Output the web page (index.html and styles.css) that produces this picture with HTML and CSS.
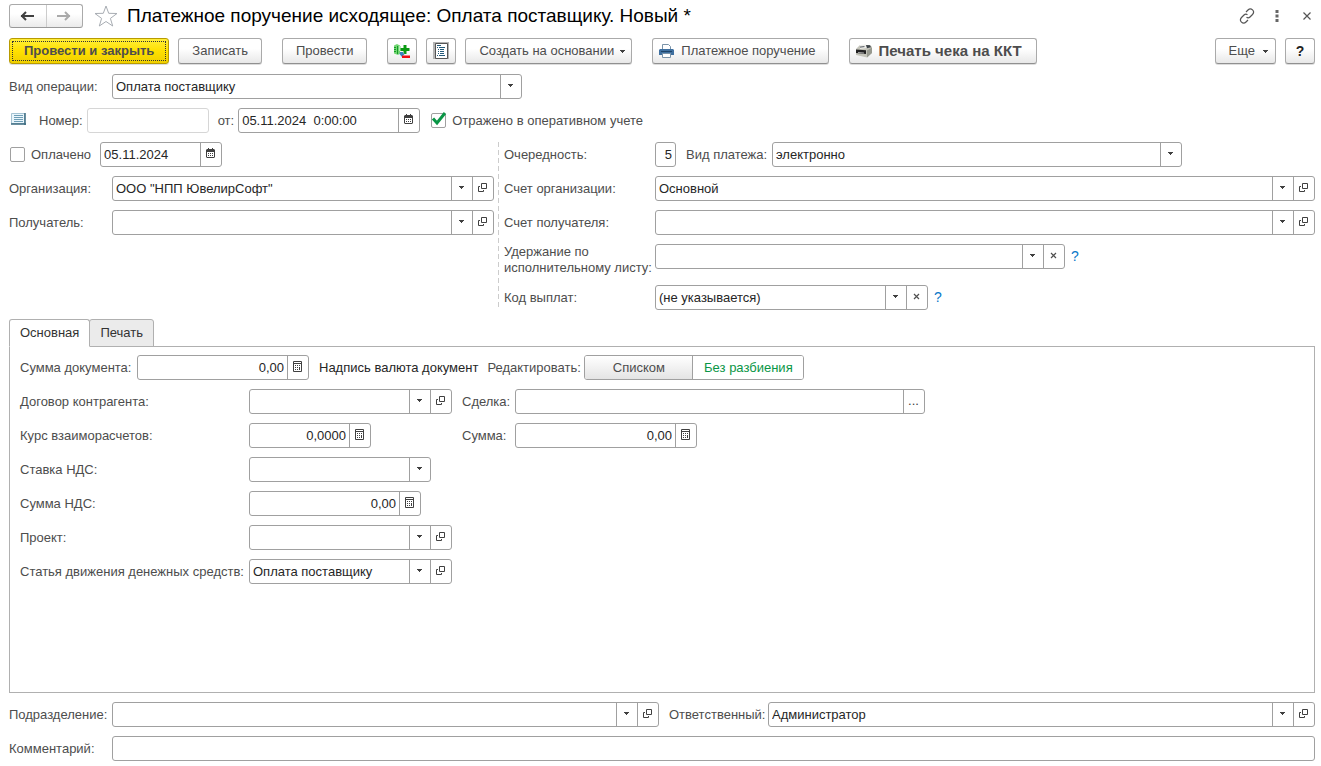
FILE: index.html
```html
<!DOCTYPE html>
<html lang="ru">
<head>
<meta charset="utf-8">
<title>Платежное поручение исходящее</title>
<link rel="stylesheet" href="styles.css">
</head>
<body>
<svg class="sprite" aria-hidden="true">
  <symbol id="arrow" viewBox="0 0 5 3"><path d="M0 0h5v1H4v1H3v1H2V2H1V1H0z" fill="#404040"/></symbol>
  <symbol id="open" viewBox="0 0 9 9"><path d="M3.500.5h5v5h-5zM2 3.500H.5v5h5V7" fill="none" stroke="#404040"/></symbol>
  <symbol id="cross" viewBox="0 0 7 7"><path d="M1 1l5 5M6 1L1 6" fill="none" stroke="#505050" stroke-width="1.200"/></symbol>
  <symbol id="calc" viewBox="0 0 9 11"><path d="M.5.5h8v10h-8zM0 2.500h9" fill="none" stroke="#404040"/><path d="M2 4.500h5M2 6.500h5M2 8.500h3M6 8.500h1" fill="none" stroke="#404040" stroke-dasharray="1 1"/><path d="M6 7h1v2H6z" fill="#404040"/></symbol>
  <symbol id="cal" viewBox="0 0 9 11"><path d="M1 1h1V0h1v1h3V0h1v1h1l1 1v7l-1 1H1L0 9V2zM1 4v5h7V4z" fill="#404040" fill-rule="evenodd"/><path d="M2 5.500h5M2 7.500h5" fill="none" stroke="#404040" stroke-dasharray="1 1"/></symbol>
</svg>

<header class="title-bar">
  <div class="history">
    <button type="button" aria-label="Назад"><svg width="16" height="12" viewBox="0 0 16 12"><path d="M1 6h13M6 2L2 6l4 4" fill="none" stroke="#404040" stroke-width="2"/></svg></button>
    <button type="button" aria-label="Вперед"><svg width="16" height="12" viewBox="0 0 16 12"><path d="M1 6h13M9 2l4 4-4 4" fill="none" stroke="#aaa" stroke-width="2"/></svg></button>
  </div>
  <button type="button" class="plain star" aria-label="В избранное"><svg width="24" height="22" viewBox="0 0 24 22"><path d="M12 1l2.700 7.300 8.300.2-6.600 4.900 2.300 7.600-6.700-4.500L5.300 21l2.300-7.600L1 8.500l8.300-.2z" fill="#fff" stroke="#a8adb3"/></svg></button>
  <h1>Платежное поручение исходящее: Оплата поставщику. Новый *</h1>
  <div class="window-tools">
    <button type="button" class="plain" aria-label="Ссылка"><svg width="16" height="16" viewBox="0 0 16 16"><path d="M7 4l2-2c3-3 7.500 1 4.500 4.500l-2.500 2.500c-1 1-2.500 1-3.500.3M9 12l-2 2c-3 3-7.500-1-4.500-4.500L5 7c1-1 2.500-1 3.500-.3" fill="none" stroke="#555" stroke-width="1.200"/></svg></button>
    <button type="button" class="plain" aria-label="Меню"><svg width="4" height="12" viewBox="0 0 4 12"><path d="M.5 0h3v3h-3zM.5 4.500h3v3h-3zM.5 9h3v3h-3z" fill="#666"/></svg></button>
    <button type="button" class="plain close" aria-label="Закрыть"><svg width="8" height="8" viewBox="0 0 8 8"><path d="M.5.5l7 7M7.500.5l-7 7" stroke="#555" stroke-width="1.200"/></svg></button>
  </div>
</header>

<nav class="toolbar">
  <div class="group">
    <button type="button" class="btn primary">Провести и закрыть</button>
    <button type="button" class="btn">Записать</button>
  </div>
  <button type="button" class="btn">Провести</button>
  <div class="group">
    <button type="button" class="btn icon-btn" aria-label="Движения документа"><svg width="16" height="16" viewBox="0 0 16 16"><path d="M0 2.500L3 1l3 1.500v8L4 12 0 10.500z" fill="#73d673"/><path d="M0 4h2v1H0zM0 6h2v1H0zM0 8h2v1H0zM3 3h1v8H3z" fill="#159b28"/><path d="M5 3h2v5H5z" fill="#b7edb7"/><path d="M9.500 2h3v3h3v3h-3v3h-3V8h-3V5h3z" fill="#0a9a12"/><path d="M6 9h3v1.500h2L8 14l-3-3.500h1z" fill="#3984bd"/><path d="M8 12.500h8V15H8z" fill="#f00b12"/></svg></button>
    <button type="button" class="btn icon-btn" aria-label="Реестр"><svg width="16" height="18" viewBox="0 0 16 18"><path d="M0 0h16v17H0z" fill="#b5b5b5"/><path d="M2.500 1.500h12v15h-12z" fill="#fff" stroke="#555"/><path d="M4 3.500h4M6 5.500h6M7 7.500h4M7 9.500h4M7 11.500h4M6 13.500h6M4 5.500h1M5 7.500h1M5 9.500h1M5 11.500h1M4 13.500h1" stroke="#245a7a"/></svg></button>
    <button type="button" class="btn create">Создать на основании <svg width="5" height="3"><use href="#arrow"/></svg></button>
  </div>
  <button type="button" class="btn print"><svg width="15" height="15" viewBox="0 0 15 15"><path d="M3.500 6V.5h6l2 2V6" fill="#fff" stroke="#7a93a8"/><path d="M1 5h13l1 1v5H0V6z" fill="#3f70a0"/><path d="M2 7h11v1H2z" fill="#1e4468"/><path d="M3.500 9.500h8v4h-8z" fill="#fff" stroke="#7a93a8"/></svg>Платежное поручение</button>
  <button type="button" class="btn receipt"><svg width="16" height="14" viewBox="0 0 16 14"><path d="M0 5L4 1h10l2 2v6l-5 4.500L0 11z" fill="#c4c4ba"/><path d="M4 1l6-.5 1 3.500-7 1z" fill="#ededea"/><path d="M10 1l4 .3 1 2-4 1z" fill="#3c4248"/><path d="M0 5.500l10 .8V10L0 9z" fill="#222"/><path d="M2 8l6 .5v1L2 9z" fill="#aaa"/><path d="M11 6.500l5-3V9l-5 4.500z" fill="#97998f"/><path d="M4 2.500l4-.5 1 1-5 .8z" fill="#6a6f74"/></svg>Печать чека на ККТ</button>
  <div class="group end">
    <button type="button" class="btn more">Еще <svg width="5" height="3"><use href="#arrow"/></svg></button>
    <button type="button" class="btn icon-btn help">?</button>
  </div>
</nav>

<main>
  <div class="row">
    <label class="name" for="kind">Вид операции:</label>
    <div class="field w-long c1"><select id="kind"><option>Оплата поставщику</option></select><span class="cell"><svg width="5" height="3"><use href="#arrow"/></svg></span></div>
  </div>
  <div class="row number-row">
    <svg class="doc" width="15" height="12" viewBox="0 0 15 12"><path d="M.5.5h13v10H.5z" fill="#e9f5fb" stroke="#a5c3d3"/><path d="M0 11h15M14 0v12" stroke="#3b6b80" stroke-width="1.500"/><path d="M3 2.500h9M3 4.500h9M3 6.500h9M3 8.500h9" stroke="#6d9db5"/></svg>
    <label for="num">Номер:</label>
    <div class="field w-num disabled"><input id="num" type="text" disabled></div>
    <label for="date">от:</label>
    <div class="field w-date c1"><input id="date" type="text" value="05.11.2024  0:00:00"><button type="button" class="cell" aria-label="Календарь"><svg width="9" height="11"><use href="#cal"/></svg></button></div>
    <div class="check"><input id="acc" type="checkbox" checked><svg class="tick" width="16" height="15" viewBox="0 0 16 15"><path d="M2 6.500L6 11 14 1" fill="none" stroke="#0a9646" stroke-width="3"/></svg><label for="acc">Отражено в оперативном учете</label></div>
  </div>

  <div class="columns">
    <section class="left">
      <div class="row">
        <div class="check"><input id="paid" type="checkbox"><label for="paid">Оплачено</label></div>
        <div class="field w-num c1"><input type="text" value="05.11.2024" aria-label="Дата оплаты"><button type="button" class="cell" aria-label="Календарь"><svg width="9" height="11"><use href="#cal"/></svg></button></div>
      </div>
      <div class="row">
        <label class="name" for="org">Организация:</label>
        <div class="field grow c2"><select id="org"><option>ООО "НПП ЮвелирСофт"</option></select><span class="cell"><svg width="5" height="3"><use href="#arrow"/></svg></span><button type="button" class="cell" aria-label="Открыть"><svg width="9" height="9"><use href="#open"/></svg></button></div>
      </div>
      <div class="row">
        <label class="name" for="payee">Получатель:</label>
        <div class="field grow c2"><select id="payee"><option></option></select><span class="cell"><svg width="5" height="3"><use href="#arrow"/></svg></span><button type="button" class="cell" aria-label="Открыть"><svg width="9" height="9"><use href="#open"/></svg></button></div>
      </div>
    </section>
    <section class="right">
      <div class="row">
        <label class="name" for="order">Очередность:</label>
        <div class="field w-one num"><input id="order" type="text" value="5"></div>
        <label class="pay" for="pay">Вид платежа:</label>
        <div class="field w-long c1"><select id="pay"><option>электронно</option></select><span class="cell"><svg width="5" height="3"><use href="#arrow"/></svg></span></div>
      </div>
      <div class="row">
        <label class="name" for="acc-org">Счет организации:</label>
        <div class="field grow c2"><select id="acc-org"><option>Основной</option></select><span class="cell"><svg width="5" height="3"><use href="#arrow"/></svg></span><button type="button" class="cell" aria-label="Открыть"><svg width="9" height="9"><use href="#open"/></svg></button></div>
      </div>
      <div class="row">
        <label class="name" for="acc-payee">Счет получателя:</label>
        <div class="field grow c2"><select id="acc-payee"><option></option></select><span class="cell"><svg width="5" height="3"><use href="#arrow"/></svg></span><button type="button" class="cell" aria-label="Открыть"><svg width="9" height="9"><use href="#open"/></svg></button></div>
      </div>
      <div class="row tall">
        <label class="name" for="hold">Удержание по исполнительному листу:</label>
        <div class="field w-long c2"><select id="hold"><option></option></select><span class="cell"><svg width="5" height="3"><use href="#arrow"/></svg></span><button type="button" class="cell" aria-label="Очистить"><svg width="7" height="7"><use href="#cross"/></svg></button></div>
        <a class="hint" href="#">?</a>
      </div>
      <div class="row">
        <label class="name" for="code">Код выплат:</label>
        <div class="field w-code c2"><select id="code"><option>(не указывается)</option></select><span class="cell"><svg width="5" height="3"><use href="#arrow"/></svg></span><button type="button" class="cell" aria-label="Очистить"><svg width="7" height="7"><use href="#cross"/></svg></button></div>
        <a class="hint" href="#">?</a>
      </div>
    </section>
  </div>

  <div class="tabs" role="tablist">
    <button type="button" role="tab" aria-selected="true" class="tab active">Основная</button>
    <button type="button" role="tab" aria-selected="false" class="tab">Печать</button>
  </div>
  <section class="panel" role="tabpanel">
    <div class="row sum-row">
      <label class="sum" for="sum">Сумма документа:</label>
      <div class="field w-sum c1 num"><input id="sum" type="text" value="0,00"><button type="button" class="cell" aria-label="Калькулятор"><svg width="9" height="11"><use href="#calc"/></svg></button></div>
      <span class="currency">Надпись валюта документ</span>
      <span class="edit">Редактировать:</span>
      <div class="segment"><button type="button">Списком</button><button type="button" class="on">Без разбиения</button></div>
    </div>
    <div class="row">
      <label class="name" for="contract">Договор контрагента:</label>
      <div class="slot"><div class="field w-ref c2"><select id="contract"><option></option></select><span class="cell"><svg width="5" height="3"><use href="#arrow"/></svg></span><button type="button" class="cell" aria-label="Открыть"><svg width="9" height="9"><use href="#open"/></svg></button></div></div>
      <label class="second" for="deal">Сделка:</label>
      <div class="field w-long c1"><input id="deal" type="text"><button type="button" class="cell dots">...</button></div>
    </div>
    <div class="row">
      <label class="name" for="rate">Курс взаиморасчетов:</label>
      <div class="slot"><div class="field w-num c1 num"><input id="rate" type="text" value="0,0000"><button type="button" class="cell" aria-label="Калькулятор"><svg width="9" height="11"><use href="#calc"/></svg></button></div></div>
      <label class="second" for="total">Сумма:</label>
      <div class="field w-date c1 num"><input id="total" type="text" value="0,00"><button type="button" class="cell" aria-label="Калькулятор"><svg width="9" height="11"><use href="#calc"/></svg></button></div>
    </div>
    <div class="row">
      <label class="name" for="vat">Ставка НДС:</label>
      <div class="field w-date c1"><select id="vat"><option></option></select><span class="cell"><svg width="5" height="3"><use href="#arrow"/></svg></span></div>
    </div>
    <div class="row">
      <label class="name" for="vat-sum">Сумма НДС:</label>
      <div class="field w-sum c1 num"><input id="vat-sum" type="text" value="0,00"><button type="button" class="cell" aria-label="Калькулятор"><svg width="9" height="11"><use href="#calc"/></svg></button></div>
    </div>
    <div class="row">
      <label class="name" for="project">Проект:</label>
      <div class="field w-ref c2"><select id="project"><option></option></select><span class="cell"><svg width="5" height="3"><use href="#arrow"/></svg></span><button type="button" class="cell" aria-label="Открыть"><svg width="9" height="9"><use href="#open"/></svg></button></div>
    </div>
    <div class="row">
      <label class="name" for="flow">Статья движения денежных средств:</label>
      <div class="field w-ref c2"><select id="flow"><option>Оплата поставщику</option></select><span class="cell"><svg width="5" height="3"><use href="#arrow"/></svg></span><button type="button" class="cell" aria-label="Открыть"><svg width="9" height="9"><use href="#open"/></svg></button></div>
    </div>
  </section>

  <div class="row">
    <label class="name" for="dept">Подразделение:</label>
    <div class="field grow c2"><select id="dept"><option></option></select><span class="cell"><svg width="5" height="3"><use href="#arrow"/></svg></span><button type="button" class="cell" aria-label="Открыть"><svg width="9" height="9"><use href="#open"/></svg></button></div>
    <label class="resp" for="resp">Ответственный:</label>
    <div class="field grow c2"><select id="resp"><option>Администратор</option></select><span class="cell"><svg width="5" height="3"><use href="#arrow"/></svg></span><button type="button" class="cell" aria-label="Открыть"><svg width="9" height="9"><use href="#open"/></svg></button></div>
  </div>
  <div class="row">
    <label class="name" for="comment">Комментарий:</label>
    <div class="field grow"><input id="comment" type="text"></div>
  </div>
</main>
</body>
</html>
```
FILE: styles.css
```css
* { box-sizing: border-box; }
body {
  margin: 0;
  padding: 4px 6px 5px 9px;
  min-height: 100vh;
  display: flex;
  flex-direction: column;
  background: #fff;
  color: #4d4d4d;
  font: 13px/16px "Liberation Sans", Arial, sans-serif;
}
button, input, select { font: inherit; color: inherit; margin: 0; }
button { padding: 0; white-space: nowrap; }
svg { display: block; flex: none; }
.sprite { position: absolute; width: 0; height: 0; }
.plain { border: 0; background: none; display: flex; }

.title-bar { display: flex; align-items: center; height: 24px; margin-bottom: 10px; }
.history { display: flex; border: 1px solid #aaa; border-bottom-color: #999; border-radius: 3px; height: 24px; width: 74px; background: linear-gradient(#fff, #fff 40%, #ebebeb); }
.history button { flex: 1; border: 0; background: none; display: flex; align-items: center; justify-content: center; }
.history button + button { border-left: 1px solid #ccc; }
.star { margin: 0 9px 0 11px; }
h1 { margin: 0; font-size: 19px; line-height: 24px; font-weight: normal; color: #000; white-space: nowrap; }
.window-tools { margin-left: auto; display: flex; align-items: center; gap: 20px; padding-right: 4px; }
.close { margin-left: 4px; }

.toolbar { display: flex; gap: 20px; margin-bottom: 10px; }
.group { display: flex; gap: 9px; }
.end { margin-left: auto; }
.btn {
  display: flex; align-items: center; justify-content: center;
  height: 26px; padding: 0 13px;
  border: 1px solid #aaa; border-bottom-color: #909090; border-radius: 3px;
  background: linear-gradient(#fff, #fff 40%, #e8e8e8);
  box-shadow: 0 1px 0 #ddd;
  color: #4d4d4d;
}
.primary {
  font-weight: bold; padding: 0 14px;
  border-color: #b89b00;
  background: linear-gradient(#ffee3a, #ffe000 50%, #efcf00);
  outline: 1px dotted #333; outline-offset: -4px;
}
.icon-btn { width: 30px; padding: 0; }
.create, .more { gap: 6px; }
.create { padding: 0 6px 0 13px; }
.more { padding: 0 7px 0 13px; gap: 8px; }
.print { padding: 0 12px 0 6px; gap: 7px; }
.receipt { padding: 0 14px 0 6px; gap: 7px; font-size: 15px; font-weight: bold; }
.help { font-size: 14px; font-weight: bold; color: #222; }

main { flex: 1; display: flex; flex-direction: column; gap: 9px; }
.row { display: flex; align-items: center; min-height: 25px; }
.name { flex: none; width: 103px; }
.field {
  display: grid; grid-template-columns: minmax(0, 1fr);
  height: 25px; flex: none;
  border: 1px solid #a0a0a0; border-radius: 3px; overflow: hidden; background: #fff;
}
.c1 { grid-template-columns: minmax(0, 1fr) 21px; }
.c2 { grid-template-columns: minmax(0, 1fr) 21px 21px; }
.grow { flex: 1 1 0; min-width: 0; }
.disabled { border-color: #d6d6d6; }
.field input, .field select {
  grid-row: 1; grid-column: 1; width: 100%; height: 23px; min-width: 0;
  border: 0; outline: 0; background: transparent; padding: 0 3px;
  color: #262626; appearance: none; white-space: pre;
}
.field select { grid-column: 1 / 3; }
.num input { text-align: right; }
.cell {
  grid-row: 1; height: 23px;
  display: flex; align-items: center; justify-content: center;
  border: 0; border-left: 1px solid #a0a0a0; background: none;
  padding: 0 1px 2px 0; color: #404040;
}
span.cell { grid-column: 2; padding-right: 2px; pointer-events: none; }
.w-long { width: 410px; }
.w-num { width: 122px; }
.w-date { width: 182px; }
.w-sum { width: 172px; }
.w-ref { width: 203px; }
.w-code { width: 273px; }
.w-one { width: 21px; }

.doc { margin: 0 13px 4px 2px; }
.number-row .w-num { margin: 0 9px 0 4px; }
.number-row .w-date { margin: 0 11px 0 4px; }
.check { display: grid; grid-template-columns: 15px auto; align-items: center; column-gap: 6px; }
.check input { grid-area: 1 / 1; appearance: none; width: 15px; height: 15px; border: 1px solid #a0a0a0; border-radius: 2px; background: #fff; }
.tick { grid-area: 1 / 1; pointer-events: none; margin-bottom: 2px; }
.check label { grid-area: 1 / 2; }
.left .check { padding: 0 9px 0 1px; }

.columns { display: grid; grid-template-columns: minmax(0, 489fr) minmax(0, 817fr); }
.left, .right { display: flex; flex-direction: column; gap: 9px; }
.left { padding-right: 4px; }
.right {
  padding-left: 6px;
  background: repeating-linear-gradient(#ccc 0 5px, transparent 5px 8px) left / 1px 100% no-repeat;
}
.right .name { width: 151px; }
.tall { align-items: flex-start; min-height: 32px; }
.pay { width: 96px; padding-left: 10px; flex: none; }
.hint { color: #0a78c8; text-decoration: none; font-size: 14px; padding: 0 6px; line-height: 25px; }

.tabs { display: flex; margin-bottom: -10px; }
.tab { height: 28px; padding: 0 10px; border: 1px solid #b0b0b0; border-radius: 3px 3px 0 0; background: #ebebeb; color: #333; }
.tab + .tab { margin-left: -1px; }
.active { background: #fff; border-bottom-color: #fff; z-index: 1; }
.panel { flex: 1; border: 1px solid #b0b0b0; padding: 8px 10px; display: flex; flex-direction: column; gap: 9px; }
.panel .name { width: 229px; }
.sum { width: 117px; }
.currency { color: #262626; margin: 0 9px 0 10px; }
.edit { width: 97px; }
.segment { display: flex; height: 25px; border: 1px solid #a0a0a0; border-radius: 3px; overflow: hidden; }
.segment button { border: 0; width: 107px; background: linear-gradient(#fff, #e4e4e4); color: #4d4d4d; }
.segment .on { width: 111px; border-left: 1px solid #a0a0a0; background: #fff; color: #0a9646; }
.slot { width: 203px; flex: none; }
.second { width: 63px; padding-left: 10px; flex: none; }
.resp { width: 109px; padding-left: 10px; flex: none; }
```
